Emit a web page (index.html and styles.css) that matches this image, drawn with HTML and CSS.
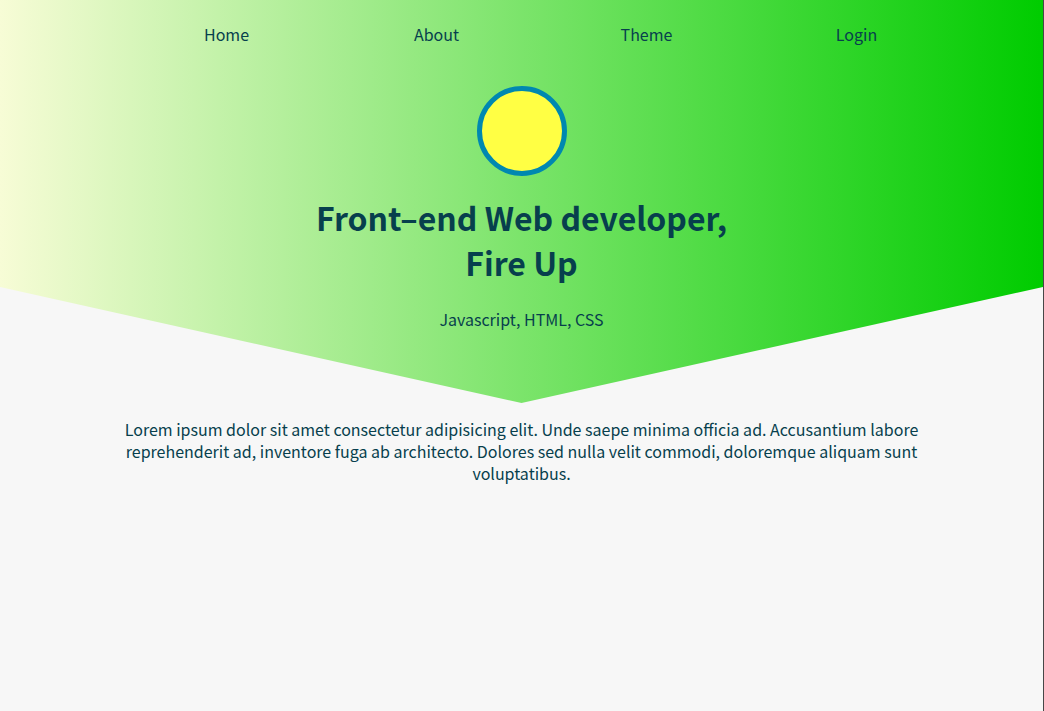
FILE: index.html
```html
<!DOCTYPE html>
<html lang="en">
<head>
<meta charset="utf-8">
<title>Fire Up</title>
<link rel="stylesheet" href="styles.css">
</head>
<body>
<div class="page">
  <header class="hero">
    <nav class="nav">
      <a class="nav-link" href="#">Home</a>
      <a class="nav-link" href="#">About</a>
      <a class="nav-link" href="#">Theme</a>
      <a class="nav-link" href="#">Login</a>
    </nav>
    <div class="avatar"></div>
    <h1 class="title">Front–end Web developer,<br>Fire Up</h1>
    <p class="subtitle">Javascript, HTML, CSS</p>
  </header>
  <main class="content">
    <p class="intro">Lorem ipsum dolor sit amet consectetur adipisicing elit. Unde saepe minima officia ad. Accusantium labore reprehenderit ad, inventore fuga ab architecto. Dolores sed nulla velit commodi, doloremque aliquam sunt voluptatibus.</p>
  </main>
</div>
</body>
</html>
```
FILE: styles.css
```css
html, body {
  margin: 0;
  padding: 0;
  height: 100%;
}
body {
  background: #f7f7f7;
  font-family: "Noto Sans CJK SC", "Noto Sans", sans-serif;
  color: #073f4d;
}
.page {
  box-sizing: border-box;
  min-height: 100%;
  border-right: 1px solid #474747;
}
.hero {
  height: 403px;
  background: linear-gradient(to right, #f7fcd6 0%, #00cc00 100%);
  clip-path: polygon(0 0, 100% 0, 100% 287px, 50% 100%, 0 287px);
  display: flex;
  flex-direction: column;
  align-items: center;
}
.nav {
  box-sizing: border-box;
  width: 880px;
  padding-left: 40px;
  margin-top: 23px;
  display: flex;
}
.nav-link {
  flex: 1;
  text-align: center;
  font-size: 16px;
  line-height: 22px;
  color: #073f4d;
  text-decoration: none;
}
.avatar {
  box-sizing: border-box;
  width: 90px;
  height: 90px;
  margin-top: 41px;
  border-radius: 50%;
  background: #ffff44;
  border: 5px solid #0088b0;
}
.title {
  margin: 19px 0 0;
  font-size: 32px;
  line-height: 45px;
  font-weight: 700;
  text-align: center;
  color: #073f4d;
}
.subtitle {
  margin: 23px 0 0;
  font-size: 16px;
  line-height: 22px;
}
.content {
  display: flex;
  justify-content: center;
}
.intro {
  width: 806px;
  margin: 15px 0 0;
  font-size: 16px;
  line-height: 22px;
  text-align: center;
}
```
